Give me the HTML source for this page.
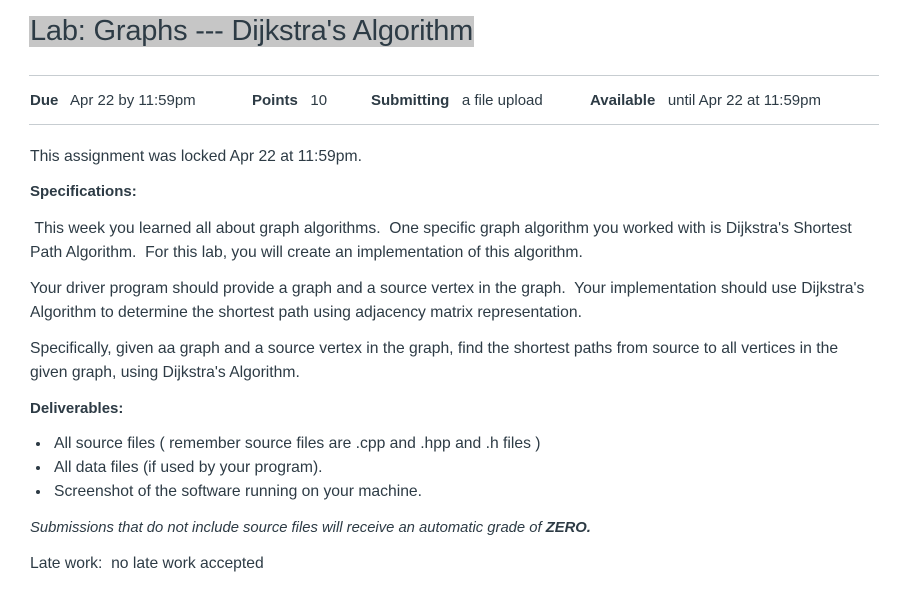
<!DOCTYPE html>
<html><head><meta charset="utf-8"><style>
body{margin:0;background:#fff;width:911px;height:605px;overflow:hidden;font-family:"Liberation Sans",sans-serif;color:#2d3b45;}
.a{position:absolute;white-space:nowrap;font-size:15.7px;line-height:24px;}
h1{position:absolute;left:29px;top:16px;margin:0;font-weight:normal;font-size:29px;line-height:31px;background:#c6c6c6;padding:0 1px;white-space:nowrap;letter-spacing:-0.2px}
.hr{position:absolute;left:29px;width:850px;height:1px;background:#c7cdd1}
b{font-weight:bold}
.dot{position:absolute;left:36px;width:4px;height:4px;border-radius:50%;background:#2d3b45}
</style></head><body>
<h1>Lab: Graphs --- Dijkstra's Algorithm</h1>
<div class="hr" style="top:75px"></div>
<div class="hr" style="top:124px"></div>
<div class="a" style="left:30px;top:89px;font-size:15px"><b>Due</b>&nbsp;&nbsp; Apr 22 by 11:59pm</div>
<div class="a" style="left:252px;top:89px;font-size:15px"><b>Points</b>&nbsp;&nbsp; 10</div>
<div class="a" style="left:371px;top:89px;font-size:15px"><b>Submitting</b>&nbsp;&nbsp; a file upload</div>
<div class="a" style="left:590px;top:89px;font-size:15px"><b>Available</b>&nbsp;&nbsp; until Apr 22 at 11:59pm</div>
<div class="a" style="left:30px;top:145px">This assignment was locked Apr 22 at 11:59pm.</div>
<div class="a" style="left:30px;top:180px;font-size:15px"><b>Specifications:</b></div>
<div class="a" style="left:30px;top:217px"> &nbsp;This week you learned all about graph algorithms.&nbsp; One specific graph algorithm you worked with is Dijkstra's Shortest<br>Path Algorithm.&nbsp; For this lab, you will create an implementation of this algorithm.</div>
<div class="a" style="left:30px;top:277px">Your driver program should provide a graph and a source vertex in the graph.&nbsp; Your implementation should use Dijkstra's<br>Algorithm to determine the shortest path using adjacency matrix representation.</div>
<div class="a" style="left:30px;top:337px">Specifically, given aa graph and a source vertex in the graph, find the shortest paths from source to all vertices in the<br>given graph, using Dijkstra's Algorithm.</div>
<div class="a" style="left:30px;top:397px;font-size:15px"><b>Deliverables:</b></div>
<div class="dot" style="top:442px"></div>
<div class="dot" style="top:466px"></div>
<div class="dot" style="top:490px"></div>
<div class="a" style="left:54px;top:432px">All source files ( remember source files are .cpp and .hpp and .h files )<br>All data files (if used by your program).<br>Screenshot of the software running on your machine.</div>
<div class="a" style="left:30px;top:516px;font-style:italic;font-size:14.8px">Submissions that do not include source files will receive an automatic grade of <b>ZERO.</b></div>
<div class="a" style="left:30px;top:552px">Late work:&nbsp; no late work accepted</div>
</body></html>
